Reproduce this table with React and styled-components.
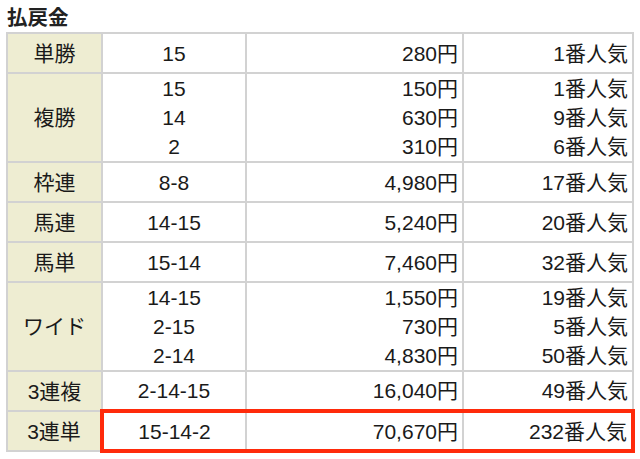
import React from "react";
import styled, { createGlobalStyle } from "styled-components";

const Global = createGlobalStyle`
  html, body { margin: 0; padding: 0; background: #fff; }
  body { font-family: "Liberation Sans", "Noto Sans CJK JP", sans-serif; color: #1a1a1a; }
`;

const Page = styled.div`
  padding: 4px 0 0 6px;
  width: 627px;
`;

const Title = styled.h2`
  margin: 0 0 4px 1px;
  font-family: "Noto Sans CJK JP", sans-serif;
  font-size: 20.5px;
  line-height: 24px;
  font-weight: 700;
  color: #222;
`;

const Table = styled.table`
  width: 626px;
  border-collapse: collapse;
  table-layout: fixed;
  font-size: 21px;
`;

const Row = styled.tr`
  height: ${(p) => (p.$lines > 1 ? 89 : 40)}px;
`;

const Label = styled.th`
  background: #eeedd2;
  border: 2px solid #d2d2d2;
  font-weight: 400;
  font-family: "Liberation Sans", "Noto Sans CJK JP", sans-serif;
  text-align: center;
  vertical-align: middle;
  padding: 0;
  line-height: 29px;
`;

const Cell = styled.td`
  border: 2px solid #d2d2d2;
  ${(p) => p.$hl && `
    border-top: 4px solid #ff2a0a;
    border-bottom: 4px solid #ff2a0a;
  `}
  ${(p) => p.$hlLeft && `border-left: 4px solid #ff2a0a;`}
  ${(p) => p.$hlRight && `border-right: 4px solid #ff2a0a;`}
  text-align: ${(p) => p.$align || "right"};
  vertical-align: middle;
  padding: 0 4px 0 4px;
  line-height: 29px;
  white-space: nowrap;
`;

const Line = styled.div``;

const data = [
  { label: "単勝", rows: [["15", "280円", "1番人気"]] },
  {
    label: "複勝",
    rows: [
      ["15", "150円", "1番人気"],
      ["14", "630円", "9番人気"],
      ["2", "310円", "6番人気"],
    ],
  },
  { label: "枠連", rows: [["8-8", "4,980円", "17番人気"]] },
  { label: "馬連", rows: [["14-15", "5,240円", "20番人気"]] },
  { label: "馬単", rows: [["15-14", "7,460円", "32番人気"]] },
  {
    label: "ワイド",
    rows: [
      ["14-15", "1,550円", "19番人気"],
      ["2-15", "730円", "5番人気"],
      ["2-14", "4,830円", "50番人気"],
    ],
  },
  { label: "3連複", rows: [["2-14-15", "16,040円", "49番人気"]] },
  { label: "3連単", rows: [["15-14-2", "70,670円", "232番人気"]], hl: true },
];

export default function App() {
  return (
    <Page>
      <Global />
      <Title>払戻金</Title>
      <Table>
        <colgroup>
          <col style={{ width: 95 }} />
          <col style={{ width: 144 }} />
          <col style={{ width: 217 }} />
          <col style={{ width: 170 }} />
        </colgroup>
        <tbody>
          {data.map((d) => (
            <Row key={d.label} $lines={d.rows.length}>
              <Label>{d.label}</Label>
              <Cell $align="center" $hl={d.hl} $hlLeft={d.hl}>
                {d.rows.map((r, i) => (
                  <Line key={i}>{r[0]}</Line>
                ))}
              </Cell>
              <Cell $hl={d.hl}>
                {d.rows.map((r, i) => (
                  <Line key={i}>{r[1]}</Line>
                ))}
              </Cell>
              <Cell $hl={d.hl} $hlRight={d.hl}>
                {d.rows.map((r, i) => (
                  <Line key={i}>{r[2]}</Line>
                ))}
              </Cell>
            </Row>
          ))}
        </tbody>
      </Table>
    </Page>
  );
}
